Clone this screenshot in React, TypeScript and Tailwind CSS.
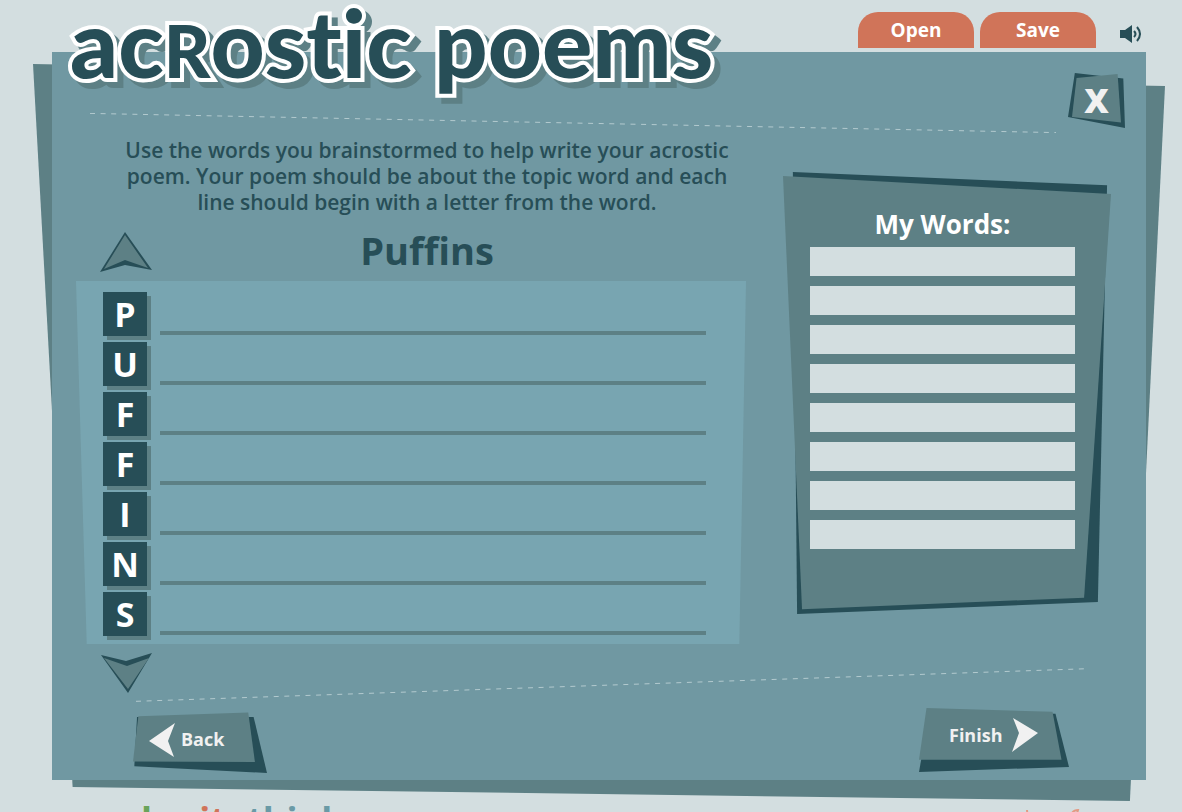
import React from 'react';

const LETTERS = ['P', 'U', 'F', 'F', 'I', 'N', 'S'];
const WORDS = [1, 2, 3, 4, 5, 6, 7, 8];

const Title: React.FC = () => (
  <h1 className="relative z-10 whitespace-nowrap font-['Lato',sans-serif] text-[94px] font-black leading-[84px] text-[#274e57] drop-shadow-[6px_6px_0_#5d8085] [-webkit-text-stroke:8px_#ffffff] [font-variant-ligatures:none] [paint-order:stroke_fill]">
    ac<span className="text-[72px] leading-none">R</span>ostic poems
  </h1>
);

const SpeakerIcon: React.FC = () => (
  <svg width="22" height="20" viewBox="0 0 22 20" fill="#274e57">
    <path d="M0 6H5L12 1V19L5 14H0Z" />
    <path d="M14 7Q17 10 14 13M17 3Q23 10 17 17" fill="none" stroke="#274e57" strokeWidth="2" />
  </svg>
);

const DashedRule: React.FC<{ up?: boolean; className: string }> = ({ up, className }) => (
  <svg className={className} viewBox="0 0 100 100" preserveAspectRatio="none" aria-hidden="true">
    <line
      x1="0"
      y1={up ? 98 : 2}
      x2="100"
      y2={up ? 2 : 98}
      stroke="#b3cacf"
      strokeWidth="1"
      strokeDasharray="5 5.6"
      vectorEffect="non-scaling-stroke"
    />
  </svg>
);

const Header: React.FC = () => (
  <header className="flex h-[52px] items-start justify-between pl-[70px] pr-10">
    <Title />
    <div className="flex items-start pt-3">
      <button type="button" className="h-9 w-[116px] rounded-t-[20px] bg-[#d07459] text-[19px] font-bold text-white">
        Open
      </button>
      <button type="button" className="ml-1.5 h-9 w-[116px] rounded-t-[20px] bg-[#d07459] text-[19px] font-bold text-white">
        Save
      </button>
      <button type="button" aria-label="Sound" className="ml-6 mt-3">
        <SpeakerIcon />
      </button>
    </div>
  </header>
);

const Board: React.FC = () => (
  <section className="min-w-0 flex-1">
    <p className="mx-auto max-w-[660px] pl-8 text-center text-[21px] font-semibold leading-[26px] text-[#274e57]">
      Use the words you brainstormed to help write your acrostic poem. Your poem should be about the topic word and each line should begin with a letter from the word.
    </p>
    <div className="relative mt-4 flex h-[50px] items-center justify-center pl-8">
      <button type="button" aria-label="Scroll up" className="absolute left-6 top-0">
        <svg width="54" height="42" viewBox="0 0 54 42">
          <path d="M25 1L52 39L25 34L0 41Z" fill="#274e57" />
          <path d="M25 4L48 37L25 29L4 38Z" fill="#5d8085" />
        </svg>
      </button>
      <h2 className="pb-3 text-[38px] font-bold leading-none text-[#274e57]">Puffins</h2>
    </div>
    <ul className="flex flex-col gap-1.5 bg-[#78a5b1] pb-2 pl-[27px] pr-10 pt-[11px] [clip-path:polygon(0_0,100%_0,99%_100%,1.6%_100%)]">
      {LETTERS.map((letter, i) => (
        <li key={i} className="flex gap-[13px]">
          <label
            htmlFor={`line-${i}`}
            className="flex size-11 shrink-0 items-center justify-center bg-[#274e57] text-[34px] font-bold text-white shadow-[4px_4px_0_#5d8085]"
          >
            {letter}
          </label>
          <input
            id={`line-${i}`}
            type="text"
            className="h-[43px] min-w-0 flex-1 border-b-4 border-[#5d8085] bg-transparent px-2 text-2xl text-[#274e57] outline-none"
          />
        </li>
      ))}
    </ul>
    <button type="button" aria-label="Scroll down" className="ml-6 mt-2 block">
      <svg width="54" height="42" viewBox="0 0 54 42">
        <path d="M1 3L26 9L52 1L28 41Z" fill="#274e57" />
        <path d="M4 6L27 14L49 6L28 37Z" fill="#5d8085" />
      </svg>
    </button>
  </section>
);

const MyWords: React.FC = () => (
  <aside className="relative mt-[35px] w-[328px] shrink-0 self-start">
    <div className="absolute inset-0 bg-[#274e57] [clip-path:polygon(3%_0,98.8%_3%,96%_97.3%,4.3%_100%)]" />
    <div className="absolute inset-0 bg-[#5d8085] [clip-path:polygon(0_0.9%,100%_5%,91.8%_96.3%,5.8%_98.9%)]" />
    <div className="relative px-[27px] pb-[65px] pr-9 pt-[34px]">
      <h2 className="text-center text-[26px] font-bold leading-9 text-white">My Words:</h2>
      <div className="mt-[5px] flex flex-col gap-2.5">
        {WORDS.map((n) => (
          <input key={n} type="text" aria-label={`Word ${n}`} className="h-[29px] w-full bg-[#d3dee0] px-2 text-[#274e57] outline-none" />
        ))}
      </div>
    </div>
  </aside>
);

const Footer: React.FC = () => (
  <footer className="flex h-8 items-start justify-between pl-[70px] pr-[100px]">
    <a href="#" className="mt-3 text-[36px] font-bold leading-[56px]">
      <span className="text-[#6aa35a]">read</span>
      <span className="text-[#d07459]">write</span>
      <span className="text-[#6a9aa6]">think</span>
    </a>
    <svg width="58" height="40" viewBox="0 0 58 40" fill="none" stroke="#e39a83" strokeWidth="2" className="mt-[29px]" aria-hidden="true">
      <path d="M3 1L4 12M48 4Q50 1 54 1L52 8" />
    </svg>
  </footer>
);

export default function App() {
  return (
    <div className="h-screen overflow-hidden bg-[#d3dee0] font-['Open_Sans',sans-serif]">
      <Header />
      <main className="relative ml-[52px] mr-9">
        <div className="absolute -bottom-[21px] -left-[19px] -right-[19px] top-3 bg-[#5d8085] [clip-path:polygon(0_0,100%_3%,96.9%_100%,3.5%_98.1%)]" />
        <div className="relative bg-[#7098a2] pb-[7px] pt-[21px]">
          <div className="flex items-start pl-[38px] pr-[21px]">
            <DashedRule className="mt-10 h-5 min-w-0 flex-1" />
            <button type="button" aria-label="Close" className="relative ml-3 h-[55px] w-[57px] text-[34px] font-extrabold text-[#f1f1f1]">
              <span className="absolute inset-0 bg-[#274e57] [clip-path:polygon(12%_0,97%_10%,100%_100%,0_80%)]" />
              <span className="absolute inset-0 bg-[#5d8085] [clip-path:polygon(15%_9%,87%_2%,93%_90%,7%_80%)]" />
              <span className="relative">X</span>
            </button>
          </div>
          <div className="mt-1 flex gap-[37px] pl-6 pr-[35px]">
            <Board />
            <MyWords />
          </div>
          <DashedRule up className="-mt-[26px] ml-[84px] block h-[34px] w-[87%]" />
          <div className="mt-1.5 flex items-start justify-between pl-[81px] pr-[77px]">
            <button type="button" className="relative mt-1 flex h-[61px] w-[134px] items-center gap-1.5 pb-1.5 pl-4 text-[18px] font-bold text-[#f1f1f1]">
              <span className="absolute inset-0 bg-[#274e57] [clip-path:polygon(3%_8%,90%_8%,100%_100%,1%_89%)]" />
              <span className="absolute inset-0 bg-[#5d8085] [clip-path:polygon(4%_7%,86%_1%,91%_82%,0_81%)]" />
              <svg width="26" height="34" viewBox="0 0 26 34" className="relative">
                <path d="M0 18L26 0L19 18L25 34Z" fill="#f1f1f1" />
              </svg>
              <span className="relative">Back</span>
            </button>
            <button type="button" className="relative flex h-16 w-[150px] items-center gap-2.5 pb-2.5 pl-[30px] text-[18px] font-bold text-[#f1f1f1]">
              <span className="absolute inset-0 bg-[#274e57] [clip-path:polygon(3%_60%,50%_7%,91%_9%,100%_92%,0_100%)]" />
              <span className="absolute inset-0 bg-[#5d8085] [clip-path:polygon(5%_0,89%_6%,95%_81%,0_81%)]" />
              <span className="relative">Finish</span>
              <svg width="26" height="34" viewBox="0 0 26 34" className="relative">
                <path d="M1 0L26 15L0 34L7 15Z" fill="#f1f1f1" />
              </svg>
            </button>
          </div>
        </div>
      </main>
      <Footer />
    </div>
  );
}
